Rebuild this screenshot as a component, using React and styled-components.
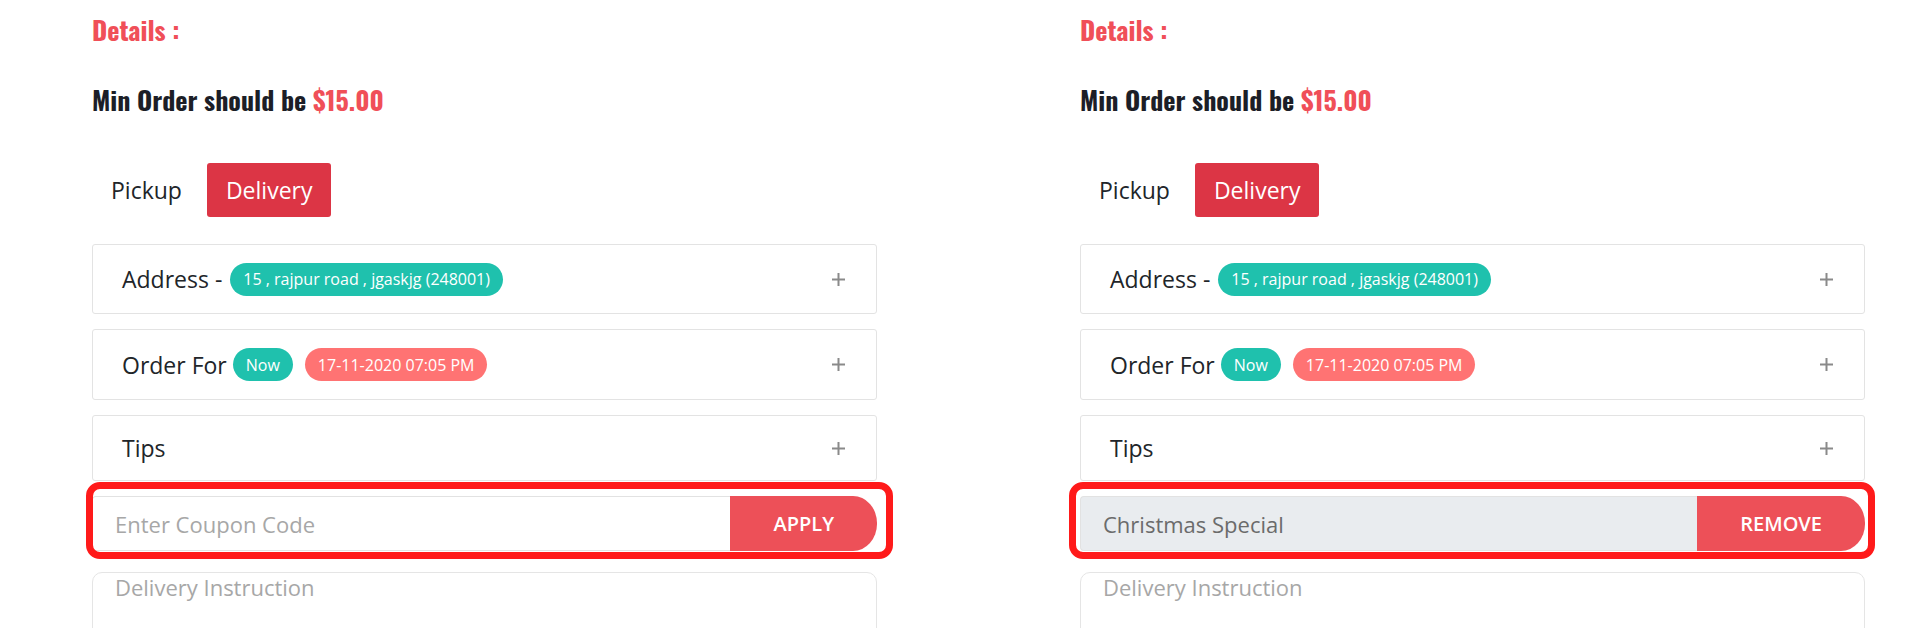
import React from 'react';
import styled, { createGlobalStyle } from 'styled-components';

const GlobalStyle = createGlobalStyle`
  html, body {
    margin: 0;
    padding: 0;
    background: #ffffff;
    overflow: hidden;
  }
  body {
    font-family: "Open Sans", "Liberation Sans", sans-serif;
    color: #212529;
  }
  * {
    box-sizing: border-box;
  }
`;

const Page = styled.div`
  display: flex;
  gap: 203px;
  padding-left: 92px;
`;

const Panel = styled.section`
  width: 785px;
  display: flex;
  flex-direction: column;
`;

const Title = styled.h3`
  margin: 13px 0 0;
  font-family: "Oswald", "Liberation Sans Narrow", "DejaVu Sans Condensed", sans-serif;
  font-size: 26px;
  line-height: 34px;
  font-weight: 700;
  color: #f04f58;
`;

const MinOrder = styled.h4`
  margin: 36px 0 0;
  font-family: "Oswald", "Liberation Sans Narrow", "DejaVu Sans Condensed", sans-serif;
  font-size: 26px;
  line-height: 34px;
  font-weight: 700;
  color: #1c1e27;

  span {
    color: #f04f58;
  }
`;

const ModeSwitch = styled.div`
  display: flex;
  gap: 6px;
  margin-top: 46px;
`;

const ModeButton = styled.button`
  height: 54px;
  padding: 0 19px;
  border: none;
  border-radius: 3px;
  font-family: "Open Sans", sans-serif;
  font-size: 23px;
  background: ${p => (p.active ? '#dc3545' : 'transparent')};
  color: ${p => (p.active ? '#ffffff' : '#212529')};
  cursor: pointer;
`;

const Stack = styled.div`
  display: flex;
  flex-direction: column;
  gap: 15px;
  margin-top: 27px;
`;

const Card = styled.div`
  display: flex;
  align-items: center;
  justify-content: space-between;
  min-height: ${p => p.h}px;
  padding: 0 31px 0 29px;
  border: 1px solid #e3e3e3;
  border-radius: 3px;
  background: #ffffff;
`;

const CardTitle = styled.div`
  display: flex;
  align-items: center;
  gap: 6px;
  font-size: 23px;
  line-height: 30px;
  color: #212529;
`;

const Pill = styled.span`
  display: inline-flex;
  align-items: center;
  height: 33px;
  padding: 0 13px;
  border-radius: 17px;
  font-size: 16px;
  color: #ffffff;
  background: ${p => p.color};
  margin-left: ${p => p.offset || 0}px;
`;

const PlusIcon = () => (
  <svg width="13" height="13" viewBox="0 0 13 13">
    <path d="M6.5 0v13M0 6.5h13" stroke="#8a8a8a" strokeWidth="2" />
  </svg>
);

const CouponRow = styled.div`
  position: relative;
  display: flex;
  height: 55px;
`;

const CouponInput = styled.input`
  flex: 1;
  min-width: 0;
  height: 100%;
  padding: 0 22px;
  border: 1px solid #e2e2e2;
  border-right: none;
  border-radius: 4px 0 0 4px;
  font-family: "Open Sans", sans-serif;
  font-size: 22px;
  color: #6b6b6b;
  background: ${p => (p.disabled ? '#e9ecef' : '#ffffff')};
  outline: none;

  &::placeholder {
    color: #a7a7a7;
  }
`;

const CouponButton = styled.button`
  height: 100%;
  padding: 0 43px;
  border: none;
  border-radius: 0 24px 24px 0 / 0 27px 27px 0;
  background: #ed5058;
  color: #ffffff;
  font-family: "Open Sans", sans-serif;
  font-size: 20px;
  font-weight: 600;
  cursor: pointer;
`;

/* hand-drawn highlight frame around the coupon field */
const Highlight = styled.div`
  position: absolute;
  top: -14px;
  bottom: -8px;
  left: ${p => p.l}px;
  right: ${p => p.r}px;
  border: 7px solid #ff1a1a;
  border-radius: 14px;
  pointer-events: none;
`;

const Instruction = styled.textarea`
  margin-top: 21px;
  height: 110px;
  padding: 1px 22px;
  border: 1px solid #e5e5e5;
  border-radius: 10px;
  resize: none;
  font-family: "Open Sans", sans-serif;
  font-size: 22px;
  line-height: 26px;
  outline: none;

  &::placeholder {
    color: #a7a7a7;
  }
`;

const CheckoutPanel = ({ coupon, frame }) => (
  <Panel>
    <Title>Details :</Title>
    <MinOrder>
      Min Order should be <span>$15.00</span>
    </MinOrder>
    <ModeSwitch>
      <ModeButton>Pickup</ModeButton>
      <ModeButton active>Delivery</ModeButton>
    </ModeSwitch>
    <Stack>
      <Card h={70}>
        <CardTitle>
          Address -<Pill color="#1fc1ad" offset={2}>15 , rajpur road , jgaskjg (248001)</Pill>
        </CardTitle>
        <PlusIcon />
      </Card>
      <Card h={71}>
        <CardTitle>
          Order For
          <Pill color="#1fc1ad">Now</Pill>
          <Pill color="#ff7373" offset={6}>17-11-2020 07:05 PM</Pill>
        </CardTitle>
        <PlusIcon />
      </Card>
      <Card h={66}>
        <CardTitle>Tips</CardTitle>
        <PlusIcon />
      </Card>
      <CouponRow>
        {coupon ? (
          <CouponInput disabled value={coupon} readOnly />
        ) : (
          <CouponInput placeholder="Enter Coupon Code" />
        )}
        <CouponButton>{coupon ? 'REMOVE' : 'APPLY'}</CouponButton>
        <Highlight l={frame.l} r={frame.r} />
      </CouponRow>
    </Stack>
    <Instruction placeholder="Delivery Instruction" />
  </Panel>
);

export default function App() {
  return (
    <>
      <GlobalStyle />
      <Page>
        <CheckoutPanel frame={{ l: -6, r: -16 }} />
        <CheckoutPanel coupon="Christmas Special" frame={{ l: -11, r: -10 }} />
      </Page>
    </>
  );
}
